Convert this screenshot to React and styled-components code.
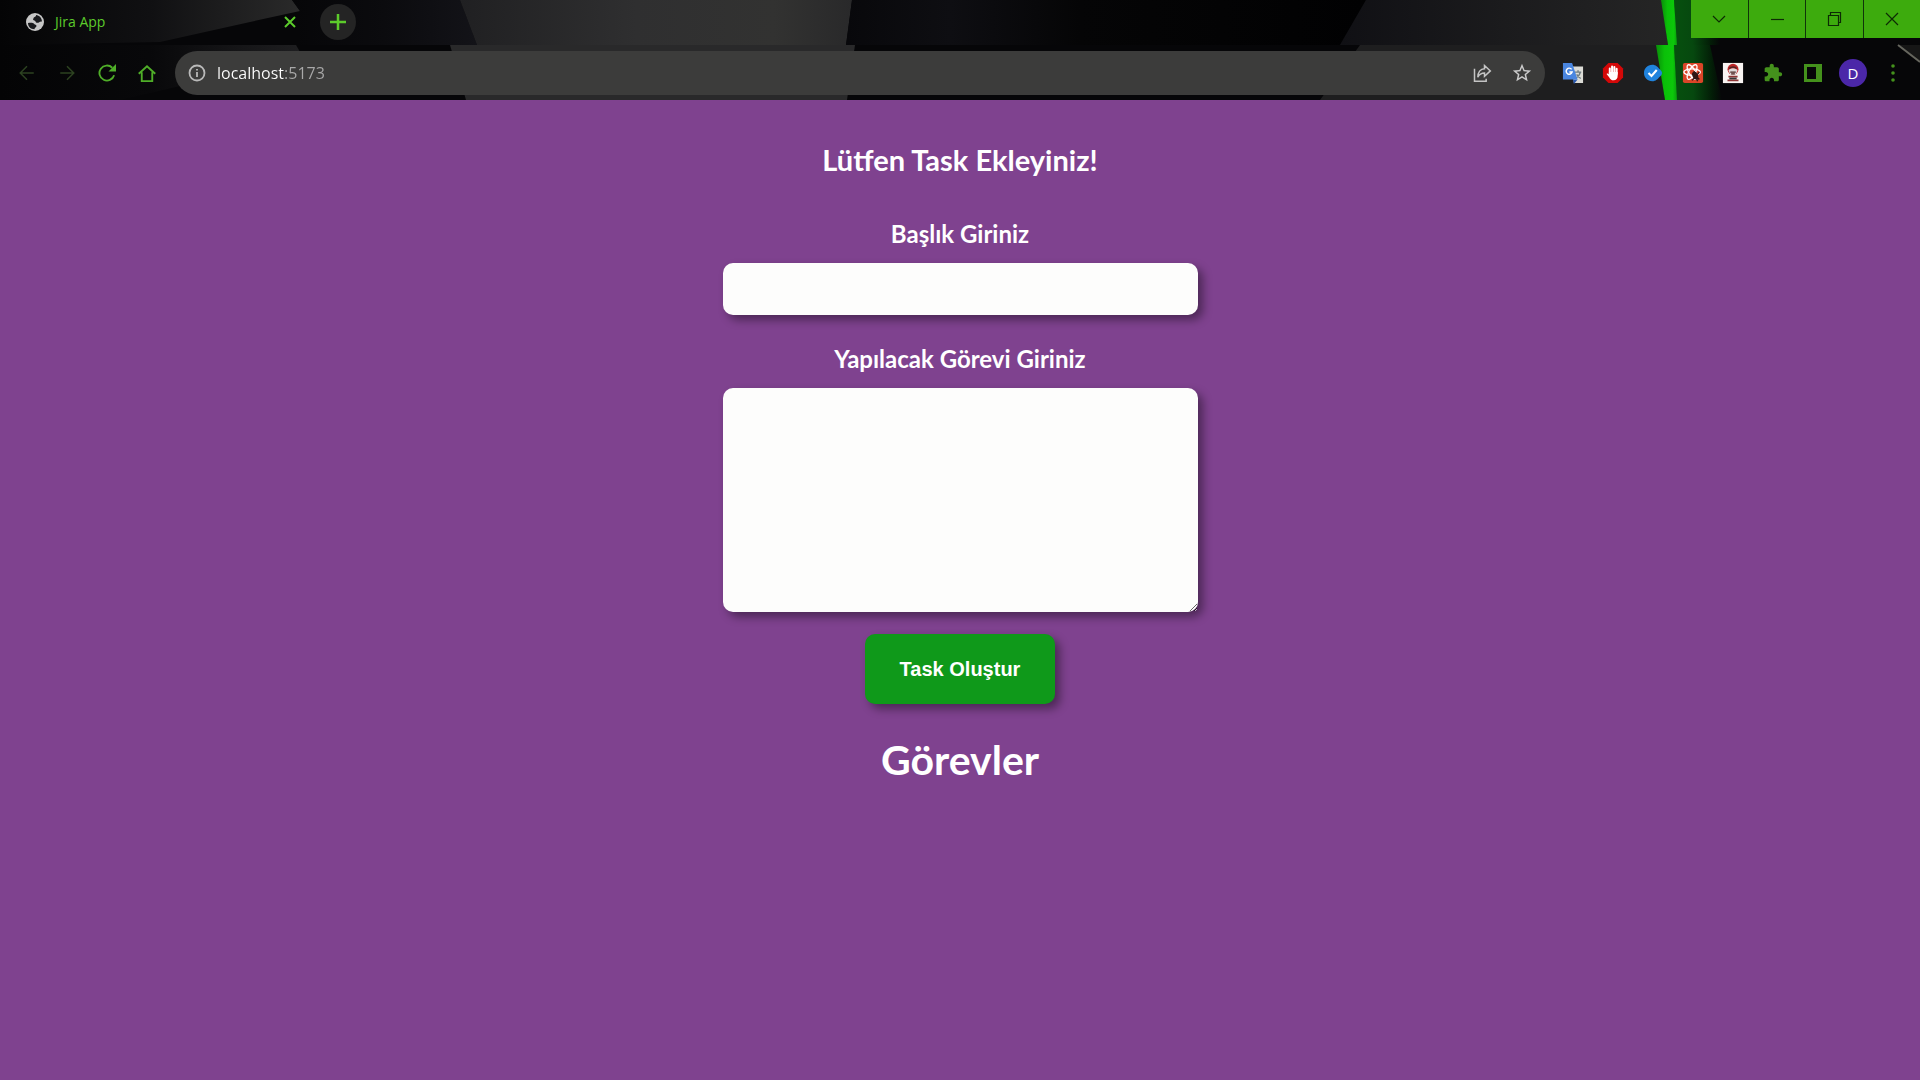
import React from "react";
import styled, { createGlobalStyle } from "styled-components";

const ui = '"Open Sans", "Noto Sans", sans-serif';
const rounded = 'Lato, "Open Sans", sans-serif';
const lime = "#5ccb2b";
const fern = "#4fae28";
const leaf = "#44911c";

const GlobalStyle = createGlobalStyle`
  *, *::before, *::after { box-sizing: border-box; }
  body { margin: 0; background: #7f428f; }
  button, input, textarea { margin: 0; }
`;

const Page = styled.div`
  min-height: 100vh;
  display: flex;
  flex-direction: column;
`;

const Chrome = styled.header`
  position: relative;
  isolation: isolate;
  background: #060608;
  font-family: ${ui};
`;

const Backdrop = styled.svg`
  position: absolute;
  inset: 0;
  z-index: -1;
  width: 100%;
  height: 100%;
`;

const TabStrip = styled.div`
  height: 45px;
  display: flex;
  align-items: flex-start;
  justify-content: space-between;
`;

const Tabs = styled.div`
  display: flex;
  align-items: center;
  padding: 4px 0 0 26px;
`;

const Tab = styled.div`
  width: 274px;
  display: flex;
  align-items: center;
  gap: 11px;
`;

const TabTitle = styled.span`
  flex: 1;
  font-size: 14px;
  line-height: 20px;
  color: ${lime};
`;

const IconButton = styled.button`
  display: grid;
  place-items: center;
  flex: none;
  width: ${(p) => p.$size || 40}px;
  height: ${(p) => p.$size || 40}px;
  padding: 0;
  border: 0;
  border-radius: 50%;
  background: ${(p) => p.$fill || "transparent"};
  color: ${(p) => p.$color || lime};
`;

const NewTab = styled(IconButton)`
  margin-left: 20px;
`;

const WindowControls = styled.div`
  width: 229px;
  display: grid;
  grid-template-columns: repeat(4, 1fr);
  gap: 1px;
  background: #10340a;
`;

const WindowButton = styled.button`
  display: grid;
  place-items: center;
  height: 38px;
  padding: 0;
  border: 0;
  background: #3dab0d;
  color: #0d2b05;
`;

const Toolbar = styled.div`
  display: flex;
  align-items: center;
  padding: 6px 7px 5px;
`;

const Omnibox = styled.form`
  flex: 1;
  height: 44px;
  display: flex;
  align-items: center;
  margin-left: 8px;
  padding: 0 3px 0 13px;
  border-radius: 22px;
  background: #3c3c3b;
`;

const Address = styled.input`
  flex: 1;
  min-width: 0;
  margin-left: 11px;
  padding: 0;
  border: 0;
  outline: 0;
  font-family: ${ui};
  font-size: 16px;
  line-height: 24px;
  background: linear-gradient(90deg, #fff 68px, #a9a9a9 68px);
  background-clip: text;
  -webkit-text-fill-color: transparent;
`;

const Extensions = styled.div`
  display: flex;
  margin-left: 8px;
`;

const Avatar = styled.span`
  display: grid;
  place-items: center;
  width: 28px;
  height: 28px;
  border-radius: 50%;
  background: #4b27a8;
  color: #fff;
  font: 15px/28px ${ui};
`;

const Main = styled.main`
  flex: 1;
  display: flex;
  flex-direction: column;
  align-items: center;
  padding: 40px 16px;
  background: #7f428f;
  color: #fff;
  font-family: ${rounded};
`;

const Title = styled.h2`
  margin: 0;
  font-size: 29px;
  line-height: 40px;
  font-weight: 700;
`;

const TaskForm = styled.form`
  width: 100%;
  max-width: 475px;
  display: flex;
  flex-direction: column;
  align-items: center;
  margin-top: 10px;
`;

const Label = styled.label`
  margin: 28px 0 13px;
  font-size: 24px;
  line-height: 32px;
  font-weight: 700;
`;

const lifted = `
  border: 0;
  border-radius: 10px;
  box-shadow: 5px 5px 10px rgba(0, 0, 0, 0.4);
`;

const TextField = styled.input`
  ${lifted}
  width: 100%;
  height: 52px;
  padding: 12px;
  background: #fdfdfc;
  font: 20px/28px ${rounded};
`;

const TextBox = styled.textarea`
  ${lifted}
  display: block;
  width: 100%;
  height: 224px;
  padding: 12px;
  background: #fdfdfc;
  font: 20px/28px ${rounded};
`;

const Submit = styled.button`
  ${lifted}
  margin-top: 22px;
  padding: 23px 35px;
  background: #0f991a;
  color: #fff;
  font: 700 20px/24px "Liberation Sans", Arial, sans-serif;
`;

const ListTitle = styled.h1`
  margin: 32px 0 0;
  font-size: 41px;
  line-height: 48px;
  font-weight: 700;
`;

const Svg = ({ size = 20, box = 24, children, ...rest }) => (
  <svg width={size} height={size} viewBox={`0 0 ${box} ${box}`} fill="none" stroke="currentColor" strokeWidth="2" aria-hidden="true" {...rest}>
    {children}
  </svg>
);

const Fade = ({ id, stops }) => (
  <linearGradient id={id} x1="0" x2="1">
    {stops.map(([offset, color]) => (
      <stop key={offset} offset={offset} stopColor={color} />
    ))}
  </linearGradient>
);

const ThemeArt = () => (
  <Backdrop viewBox="0 0 1920 100" preserveAspectRatio="none" aria-hidden="true">
    <defs>
      <Fade id="wedge" stops={[[0, "#040405"], [0.5, "#101012"], [1, "#2a2a2a"]]} />
      <Fade id="slab" stops={[[0, "#060608"], [0.5, "#0b0b0e"], [1, "#131318"]]} />
      <Fade id="panel" stops={[[0, "#202022"], [0.45, "#2f2f30"], [0.8, "#323231"], [1, "#29292a"]]} />
      <Fade id="shade" stops={[[0, "#08080b"], [0.2, "#0e0e12"], [0.45, "#050506"], [1, "#010102"]]} />
      <Fade id="right" stops={[[0, "#101014"], [0.5, "#1b1b1d"], [1, "#252525"]]} />
      <Fade id="low" stops={[[0, "#040405"], [0.5, "#08080a"], [1, "#1e1e20"]]} />
      <Fade id="beam" stops={[[0, "#0a8c0a"], [0.4, "#0ac008"], [0.8, "#0cc80a"], [1, "#0a9c0c"]]} />
      <Fade id="glow" stops={[[0, "#06500e"], [0.4, "#06480f"], [0.8, "#031c07"], [1, "#060608"]]} />
    </defs>
    <path d="M0 0H292L300 11 250 22 160 42 0 45Z" fill="url(#wedge)" />
    <path d="M292 0H460L477 45H300V11Z" fill="url(#slab)" />
    <path d="M460 0H852L846 45H477Z" fill="url(#panel)" />
    <path d="M852 0H1366L1340 45H846Z" fill="url(#shade)" />
    <path d="M1366 0H1662L1668 45H1340Z" fill="url(#right)" />
    <path d="M1674 0H1720V45H1676Z" fill="url(#glow)" />
    <path d="M1661 0H1674L1677 45H1668Z" fill="url(#beam)" />
    <path d="M0 45H296L300 52 180 86 120 100H0Z" fill="url(#low)" />
    <path d="M450 45H855L847 100H466Z" fill="#29292a" />
    <path d="M1360 45H1657L1665 100H1320Z" fill="#1e1e1f" />
    <path d="M1674 45H1710L1722 100H1676Z" fill="url(#glow)" />
    <path d="M1656 45H1674L1677 100H1665Z" fill="url(#beam)" />
    <path d="M1898 45H1920V62Z" fill="#161616" />
    <path d="M1898 45 1920 62" stroke="#66665e" strokeWidth="2" />
  </Backdrop>
);

const navigation = [
  { name: "Back", disabled: true, art: <path d="M21 12H3M12 3l-9 9 9 9" /> },
  { name: "Forward", disabled: true, art: <path d="M3 12h18M12 3l9 9-9 9" /> },
  {
    name: "Reload",
    art: (
      <>
        <path d="M21.5 15A10 10 0 1 1 19 5" strokeWidth="2.5" />
        <path d="M24 0v10H14z" fill="currentColor" stroke="none" />
      </>
    ),
  },
  { name: "Home", art: <path d="M1 13 12 3l11 10M5 11v12h14V11" strokeWidth="2.5" /> },
];

const extensions = [
  {
    name: "Google Translate",
    art: (
      <Svg size={22} stroke="none">
        <path d="M10 5h13v18H13z" fill="#dcdcd6" />
        <path d="M14 11h7M17.5 9v2m2.5 0c-.5 3-2.5 5-5 6.500m1-4c1 2 2.500 3.500 4.500 4.500" stroke="#6f7c80" strokeWidth="1.500" />
        <path d="M12 19h5l-4 5z" fill="#2858b0" />
        <path d="M1 1h10l6 18H1z" fill="#4a86e0" />
        <path d="M10.500 8A3.300 3.300 0 1 0 11 11H8" stroke="#fff" strokeWidth="1.600" />
      </Svg>
    ),
  },
  {
    name: "Ad blocker",
    art: (
      <Svg size={22} stroke="none">
        <path d="M7 1h10l6 6v10l-6 6H7l-6-6V7z" fill="#d40808" />
        <path d="M8.500 13V7M11 12V5M13.500 12V5.500M16 13V7.500" stroke="#fff" strokeWidth="2.200" strokeLinecap="round" />
        <path d="M7.400 11h9.700v4c0 3-1.600 5-4.300 5-2.600 0-4-1.500-5-3.500L5 13c1-1 2-.4 3 .8z" fill="#fff" />
      </Svg>
    ),
  },
  {
    name: "Verified",
    art: (
      <Svg size={18}>
        <path d="M11 1c5 0 7 3 10 6 2 2 3 3 3 5s-1 3-3 5c-3 3-5 6-10 6C4.500 23 0 18 0 12S4.500 1 11 1z" fill="#2083dd" stroke="none" />
        <path d="m6 12 4 4 7-8" stroke="#fff" strokeWidth="2.800" />
      </Svg>
    ),
  },
  {
    name: "React tools",
    art: (
      <Svg size={22} strokeWidth="1.500">
        <rect x="1" y="1" width="22" height="22" rx="2" fill="#db4528" stroke="none" />
        <g stroke="#fff">
          <ellipse cx="11" cy="11" rx="9" ry="3.500" />
          <ellipse cx="11" cy="11" rx="9" ry="3.500" transform="rotate(60 11 11)" />
          <ellipse cx="11" cy="11" rx="9" ry="3.500" transform="rotate(120 11 11)" />
        </g>
        <ellipse cx="14.500" cy="15" rx="3" ry="4.500" transform="rotate(-25 14 15)" fill="#301815" stroke="none" />
        <path d="m11 13 8 6M19 11l-8 9M13 10l4 11" stroke="#301815" />
      </Svg>
    ),
  },
  {
    name: "Capture",
    art: (
      <Svg size={22} stroke="none">
        <path d="M1 1h22v22H1z" fill="#f8f4f2" />
        <circle cx="12" cy="8" r="6" fill="#bb2527" />
        <path d="M7 9c2-3 8-3 10 0l-2 5H9z" fill="#dedada" />
        <path d="M8 7c2-2 6-2 8 0M9 11h6M10 13h4" stroke="#4b2625" strokeWidth="1.500" />
        <path d="M7 16h10M6 20h12" stroke="#8f3435" strokeWidth="2" />
        <path d="M8 18h8" stroke="#383838" />
      </Svg>
    ),
  },
  {
    name: "Extensions",
    art: (
      <Svg size={20} stroke="none">
        <path fill="currentColor" d="M20.500 11H19V7c0-1.100-.9-2-2-2h-4V3.500C13 2.120 11.880 1 10.500 1S8 2.120 8 3.500V5H4c-1.100 0-1.990.9-1.990 2v3.800H3.500c1.490 0 2.700 1.210 2.700 2.700s-1.210 2.700-2.700 2.700H2V20c0 1.100.9 2 2 2h3.800v-1.500c0-1.490 1.210-2.700 2.700-2.700s2.700 1.210 2.700 2.700V22H17c1.100 0 2-.9 2-2v-4h1.500c1.380 0 2.500-1.120 2.500-2.500S21.880 11 20.500 11z" />
      </Svg>
    ),
  },
  {
    name: "Side panel",
    art: (
      <Svg size={18} box={18} stroke="none">
        <path fill="currentColor" fillRule="evenodd" d="M0 0h18v18H0zM3 3v12h9V3z" />
      </Svg>
    ),
  },
  { name: "Profile", art: <Avatar>D</Avatar> },
  {
    name: "Menu",
    art: (
      <Svg size={18} box={18} stroke="none">
        <g fill="currentColor">
          <circle cx="9" cy="2" r="1.800" />
          <circle cx="9" cy="9" r="1.800" />
          <circle cx="9" cy="16" r="1.800" />
        </g>
      </Svg>
    ),
  },
];

const windowButtons = [
  { name: "Search tabs", art: <path d="m2 5 6 6 6-6" /> },
  { name: "Minimise", art: <path d="M2 8.500h13" /> },
  { name: "Restore", art: <path d="M2.500 4.500h10v10h-10zM4.500 4V1.500h10v10h-2" /> },
  { name: "Close", art: <path d="m2 2 12 12M14 2 2 14" /> },
];

const BrowserChrome = () => (
  <Chrome>
    <ThemeArt />
    <TabStrip>
      <Tabs>
        <Tab>
          <Svg size={18} box={18} stroke="none">
            <circle cx="9" cy="9" r="9" fill="#c6c6c6" />
            <path d="M2 10c2.500-.5 5-.5 6 .7s2.500.8 2.500 2.300-2 1.200-2 3.200C4.500 16.200 2 13.500 2 10zM10 2c.3 2-1.800 1.600-2.400 3S6.500 7 8.300 7.500s.9 2.300 3 2.300 1.700-1.600 4.700-1.300C15.800 4.800 13.500 2.500 10 2z" fill="#191a1d" />
          </Svg>
          <TabTitle>Jira App</TabTitle>
          <IconButton $size={20} aria-label="Close tab">
            <Svg size={12} box={12}><path d="m1 1 10 10M11 1 1 11" /></Svg>
          </IconButton>
        </Tab>
        <NewTab $size={36} $fill="#242424" aria-label="New tab">
          <Svg size={16} box={16} strokeWidth="2.500"><path d="M8 0v16M0 8h16" /></Svg>
        </NewTab>
      </Tabs>
      <WindowControls>
        {windowButtons.map((b) => (
          <WindowButton key={b.name} aria-label={b.name}>
            <Svg size={16} box={16} strokeWidth="1.200">{b.art}</Svg>
          </WindowButton>
        ))}
      </WindowControls>
    </TabStrip>
    <Toolbar>
      {navigation.map((n) => (
        <IconButton key={n.name} aria-label={n.name} disabled={n.disabled} $color={n.disabled ? "#2c4220" : fern}>
          <Svg size={18}>{n.art}</Svg>
        </IconButton>
      ))}
      <Omnibox>
        <Svg size={18} box={18} color="#b9b9b9" strokeWidth="1.800">
          <circle cx="9" cy="9" r="7.500" />
          <path d="M9 8v5M9 5v1.600" />
        </Svg>
        <Address aria-label="Address" defaultValue="localhost:5173" spellCheck={false} />
        <IconButton type="button" $color="#c4c4c4" aria-label="Share">
          <Svg size={20} strokeWidth="1.800">
            <path d="M3 7v15h14v-3" />
            <path d="M15 3l7 6.500-7 6.500v-4c-4 0-6 1-8 5 0-6 3-10 8-10z" />
          </Svg>
        </IconButton>
        <IconButton type="button" $color="#cbcbcb" aria-label="Bookmark">
          <Svg size={22} stroke="none">
            <path fill="currentColor" d="M22 9.240l-7.190-.62L12 2 9.190 8.630 2 9.240l5.460 4.730L5.820 21 12 17.270 18.180 21l-1.630-7.030L22 9.240zM12 15.400l-3.760 2.270 1-4.280-3.320-2.880 4.380-.38L12 6.100l1.710 4.040 4.380.38-3.320 2.880 1 4.280L12 15.400z" />
          </Svg>
        </IconButton>
      </Omnibox>
      <Extensions>
        {extensions.map((e) => (
          <IconButton key={e.name} $color={leaf} aria-label={e.name}>{e.art}</IconButton>
        ))}
      </Extensions>
    </Toolbar>
  </Chrome>
);

export default function App() {
  return (
    <Page>
      <GlobalStyle />
      <BrowserChrome />
      <Main>
        <Title>Lütfen Task Ekleyiniz!</Title>
        <TaskForm onSubmit={(e) => e.preventDefault()}>
          <Label htmlFor="title">Başlık Giriniz</Label>
          <TextField id="title" type="text" />
          <Label htmlFor="task">Yapılacak Görevi Giriniz</Label>
          <TextBox id="task" />
          <Submit type="submit">Task Oluştur</Submit>
        </TaskForm>
        <ListTitle>Görevler</ListTitle>
      </Main>
    </Page>
  );
}
